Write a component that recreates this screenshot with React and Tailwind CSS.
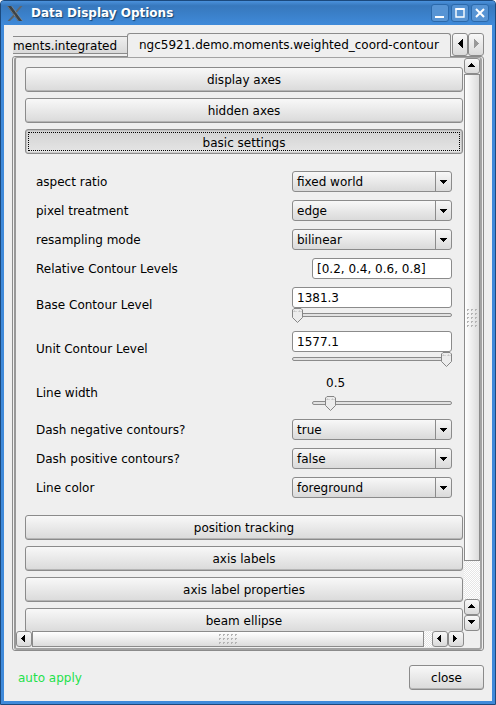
import React from "react";

const face = "bg-gradient-to-b from-[#f8f8f8] to-[#dadada]";
const edge = "border border-[#8b8b8b] rounded-[3px]";

function Section({ label, active }) {
  if (active) {
    return (
      <button className="block h-[25px] w-full shrink-0 rounded-[3px] border border-[#8b8b8b] bg-gradient-to-b from-[#d2d2d2] to-[#e6e6e6] p-[2px] shadow-[inset_0_0_0_0.5px_#aaa]">
        <span className="flex h-full items-center justify-center border border-dotted border-black pt-[3px] leading-none">{label}</span>
      </button>
    );
  }
  return (
    <button className={`flex h-[25px] w-full shrink-0 items-center justify-center leading-none shadow-[inset_0_-1px_0_#b5b5b5] ${face} ${edge}`}>
      {label}
    </button>
  );
}

const arrows = {
  left: "M7 3h1v7h-1v-1h-1v-1h-1v-1h-1v-1h1v-1h1v-1h1z",
  right: "M4 3h1v1h1v1h1v1h1v1h-1v1h-1v1h-1v1h-1z",
  up: "M6 4h1v1h1v1h1v1h1v1h-7v-1h1v-1h1v-1h1z",
  down: "M3 4h7v1h-1v1h-1v1h-1v1h-1v-1h-1v-1h-1v-1h-1z",
};

function ScrollButton({ dir }) {
  return (
    <button className={`flex h-4 w-4 shrink-0 ${face} ${edge}`}>
      <svg width="14" height="14" viewBox="0 0 14 14" shapeRendering="crispEdges">
        <path d={arrows[dir]} fill="#000" />
      </svg>
    </button>
  );
}

function TabArrow({ d, color }) {
  return (
    <svg width="5" height="9" viewBox="0 0 5 9" shapeRendering="crispEdges">
      <path d={d} fill={color} />
    </svg>
  );
}

function Row({ label, className = "h-[21px]", children }) {
  return (
    <div className={`flex items-center justify-between ${className}`}>
      <span className="leading-[14px]">{label}</span>
      {children}
    </div>
  );
}

function Select({ value }) {
  return (
    <div className={`flex h-[21px] w-40 ${face} ${edge}`}>
      <span className="flex-1 pl-1 leading-[21px]">{value}</span>
      <span className="flex w-4 items-center justify-center border-l border-[#8b8b8b]">
        <svg width="7" height="5" viewBox="0 0 7 5" shapeRendering="crispEdges">
          <path d="M0 1h7v1h-1v1h-1v1h-1v1h-1v-1h-1v-1h-1v-1h-1z" fill="#000" />
        </svg>
      </span>
    </div>
  );
}

function Field({ value, className = "w-40" }) {
  return <div className={`h-[21px] bg-white pl-1 leading-[21px] ${edge} ${className}`}>{value}</div>;
}

function Slider({ thumb }) {
  return (
    <div className="relative h-[15px]">
      <div className="pt-[5px]">
        <div className="h-1 rounded-[2px] border border-[#8b8b8b] bg-[#e2e2e2]" />
      </div>
      <svg className={`absolute top-0 ${thumb}`} width="11" height="15" viewBox="0 0 11 15">
        <path d="M2 .5h7l1.5 1.5v7.500l-5 5-5-5v-7.500z" fill="#ececec" stroke="#858585" />
        <path d="M2 4V3h1M4 3v1M7 4V3h1M9 3v1" fill="none" stroke="#aaa" strokeWidth=".7" />
      </svg>
    </div>
  );
}

function Grip({ cols, rows }) {
  const dots = [];
  for (let y = 0; y < rows; y++) {
    for (let x = 0; x < cols; x++) {
      dots.push(<path key={`${x}-${y}`} d={`M${x * 4} ${y * 4}h2v1h-1v1h-1z`} fill="#b4b4b4" />);
    }
  }
  return (
    <svg width={cols * 4 - 1} height={rows * 4 - 1} shapeRendering="crispEdges">
      {dots}
    </svg>
  );
}

function TitleButton({ children }) {
  return (
    <button className="flex h-[18px] w-[18px] items-center justify-center rounded-[3px] border border-[#2b69ab] bg-[#5794d4]">
      <svg width="16" height="16" viewBox="0 0 16 16" fill="none" stroke="#fff" strokeWidth="2">
        {children}
      </svg>
    </button>
  );
}

const track = "bg-[repeating-conic-gradient(#ffffff_0%_25%,#e6e6e6_0%_50%)] bg-[length:2px_2px]";

export default function App() {
  return (
    <div className="flex h-[705px] w-[496px] flex-col overflow-hidden rounded-t-[4px] border border-[#1b497d] bg-[#3f8ada] font-['DejaVu_Sans',sans-serif] text-[12px] text-black">
      <header className="flex h-6 shrink-0 items-center bg-gradient-to-b from-[#4b92dc] via-[#3778bd] via-20% to-[#3f8ad9] pl-[6px] pr-[6px]">
        <svg width="16" height="17" viewBox="0 0 16 17">
          <path d="M0 1h4.500l11 15h-4.500z" fill="#3c4246" />
          <path d="M13 1h2.500l-6 7-1.500-1z" fill="#62686c" />
          <path d="M7 9l1.500 1.500L3 16H.5z" fill="#5c6266" />
          <path d="M.5 1l11 15M4.500 1l11 15" stroke="#969ca0" strokeWidth=".6" />
        </svg>
        <span className="ml-2 flex-1 text-[12px] font-bold leading-6 text-white [text-shadow:1px_1px_1px_#17436f]">Data Display Options</span>
        <div className="flex gap-[2px]">
          <TitleButton><path d="M3 12h9" /></TitleButton>
          <TitleButton><path d="M4 4h8v8h-8z" strokeWidth="1.400" /><path d="M3.500 4h9" /></TitleButton>
          <TitleButton><path d="M4 4l8 8M12 4l-8 8" /></TitleButton>
        </div>
      </header>

      <main className="mx-[3px] mb-[3px] flex min-h-0 flex-1 flex-col bg-[#efefef] pt-2">
        <div className="ml-[9px] flex h-[23px] w-[471px] shrink-0">
          <div className="mt-[3px] h-[18px] w-[114px] overflow-hidden whitespace-nowrap border-b border-t border-[#8b8b8b] bg-gradient-to-b from-[#eee] to-[#d9d9d9] leading-[18px]">
            ments.integrated
          </div>
          <div className="z-10 h-[24px] w-[324px] whitespace-nowrap rounded-t-[3px] border border-b-0 border-[#8b8b8b] bg-[#efefef] pl-[11px] leading-[22px]">
            ngc5921.demo.moments.weighted_coord-contour
          </div>
          <button className={`ml-px flex h-[23px] w-4 shrink-0 items-center justify-center pb-[2px] ${face} ${edge}`}>
            <TabArrow d="M4 0h1v9h-1v-1h-1v-1h-1v-1h-1v-1h-1v-1h1v-1h1v-1h1v-1h1z" color="#000" />
          </button>
          <button className={`flex h-[23px] w-4 shrink-0 items-center justify-center pb-[2px] ${face} ${edge}`}>
            <TabArrow d="M0 0h1v1h1v1h1v1h1v1h1v1h-1v1h-1v1h-1v1h-1v1h-1z" color="#999" />
          </button>
        </div>

        <div className="ml-2 h-[595px] w-[472px] shrink-0 rounded-[3px] border border-[#8b8b8b] px-px">
          <div className="flex h-full flex-col rounded-[3px] border-2 border-t border-[#a3a3a3] border-l-[#999] pb-px">
            <div className="flex h-[573px] shrink-0">
              <div className="flex h-full w-[448px] flex-col overflow-hidden pl-[9px] pr-px pt-[9px]">
                <div className="flex shrink-0 flex-col gap-[6px]">
                  <Section label="display axes" />
                  <Section label="hidden axes" />
                  <Section label="basic settings" active />
                </div>
                <div className="mb-[17px] ml-[11px] mt-[17px] flex w-[416px] shrink-0 flex-col gap-2">
                  <Row label="aspect ratio"><Select value="fixed world" /></Row>
                  <Row label="pixel treatment"><Select value="edge" /></Row>
                  <Row label="resampling mode"><Select value="bilinear" /></Row>
                  <Row label="Relative Contour Levels"><Field value="[0.2, 0.4, 0.6, 0.8]" className="w-[140px]" /></Row>
                  <Row label="Base Contour Level" className="h-9">
                    <div className="w-40"><Field value="1381.3" /><Slider thumb="left-0" /></div>
                  </Row>
                  <Row label="Unit Contour Level" className="h-9">
                    <div className="w-40"><Field value="1577.1" /><Slider thumb="right-0" /></div>
                  </Row>
                  <Row label="Line width" className="h-9">
                    <div className="w-[140px]">
                      <div className="h-[21px] pl-[14px] pt-px leading-[14px]">0.5</div>
                      <Slider thumb="left-[13px]" />
                    </div>
                  </Row>
                  <Row label="Dash negative contours?"><Select value="true" /></Row>
                  <Row label="Dash positive contours?"><Select value="false" /></Row>
                  <Row label="Line color"><Select value="foreground" /></Row>
                </div>
                <div className="flex shrink-0 flex-col gap-[6px]">
                  <Section label="position tracking" />
                  <Section label="axis labels" />
                  <Section label="axis label properties" />
                  <Section label="beam ellipse" />
                </div>
              </div>
              <div className="flex w-4 flex-col">
                <ScrollButton dir="up" />
                <div className="flex h-[487px] shrink-0 items-center justify-center border border-[#8b8b8b] bg-gradient-to-r from-white to-[#dcdcdc] pt-[2px]">
                  <Grip cols={3} rows={5} />
                </div>
                <div className={`flex-1 ${track}`} />
                <ScrollButton dir="up" />
                <ScrollButton dir="down" />
              </div>
            </div>
            <div className="flex h-4 w-[448px] shrink-0">
              <ScrollButton dir="left" />
              <div className="flex w-[392px] items-center justify-center border border-[#8b8b8b] bg-gradient-to-b from-white to-[#dcdcdc]">
                <Grip cols={5} rows={3} />
              </div>
              <div className={`flex-1 ${track}`} />
              <ScrollButton dir="left" />
              <ScrollButton dir="right" />
            </div>
          </div>
        </div>

        <footer className="flex items-center justify-between pl-[14px] pr-2 pt-[14px]">
          <span className="text-[#1ee14b]">auto apply</span>
          <button className={`h-[25px] w-[75px] pt-px leading-[23px] shadow-[inset_0_-1px_0_#b5b5b5] ${face} ${edge}`}>close</button>
        </footer>
      </main>
    </div>
  );
}
